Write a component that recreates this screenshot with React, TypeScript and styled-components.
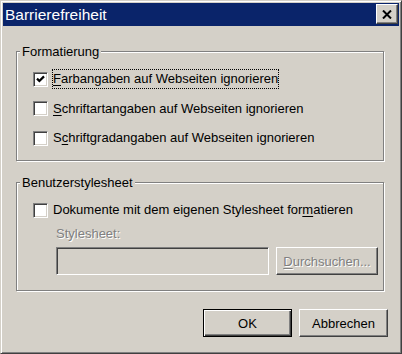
import React from 'react';
import styled, { createGlobalStyle, css } from 'styled-components';

const GlobalStyle = createGlobalStyle`
  html, body {
    margin: 0;
    padding: 0;
    background: #d4d0c8;
  }
`;

const Window = styled.div`
  box-sizing: border-box;
  width: 402px;
  height: 354px;
  padding: 2px;
  display: flex;
  flex-direction: column;
  background: #d4d0c8;
  border: 1px solid;
  border-color: #d4d0c8 #404040 #404040 #d4d0c8;
  box-shadow: inset 1px 1px 0 #fff, inset -1px -1px 0 #808080;
  font-family: 'Liberation Sans', Arial, sans-serif;
  font-size: 13px;
  color: #000;
`;

const TitleBar = styled.div`
  height: 23px;
  flex: none;
  display: flex;
  align-items: flex-start;
  justify-content: space-between;
  background: #0a246a;
`;

const Title = styled.div`
  padding-left: 2px;
  line-height: 23px;
  font-size: 15.5px;
  color: #fff;
  white-space: nowrap;
`;

const raised = css`
  border: 1px solid;
  border-color: #fff #404040 #404040 #fff;
  box-shadow: inset -1px -1px 0 #808080, inset 1px 1px 0 #d4d0c8;
`;

const CloseButton = styled.button`
  box-sizing: border-box;
  width: 22px;
  height: 20px;
  margin: 1px 1px 0 0;
  padding: 0;
  display: flex;
  align-items: center;
  justify-content: center;
  background: #d4d0c8;
  ${raised}
`;

const Body = styled.div`
  flex: 1;
  display: flex;
  flex-direction: column;
  padding: 17px 11px 0 13px;
`;

const Group = styled.fieldset<{ $gap?: number }>`
  margin: ${(p) => p.$gap ?? 0}px 4px 0 0;
  padding: 0;
  min-width: 0;
  border: 1px solid #808080;
  box-shadow: inset 1px 1px 0 #fff, 1px 1px 0 #fff;
`;

const Legend = styled.legend`
  margin-left: 3px;
  padding: 0 2px;
  line-height: 17px;
  background: #d4d0c8;
  white-space: nowrap;
`;

const GroupContent = styled.div<{ $bottom: number; $rowGap?: number }>`
  display: flex;
  flex-direction: column;
  gap: ${(p) => p.$rowGap ?? 0}px;
  padding: 9px 0 ${(p) => p.$bottom}px 16px;
`;

const Row = styled.div`
  height: 20px;
  display: flex;
  align-items: center;
`;

const Box = styled.span`
  box-sizing: border-box;
  flex: none;
  width: 15px;
  height: 15px;
  display: flex;
  align-items: center;
  justify-content: center;
  background: #fff;
  border: 1px solid;
  border-color: #808080 #fff #fff #808080;
  box-shadow: inset 1px 1px 0 #404040, inset -1px -1px 0 #d4d0c8;
`;

const Label = styled.span<{ $focused?: boolean }>`
  margin-left: 4px;
  line-height: 18px;
  white-space: nowrap;
  border: 1px dotted ${(p) => (p.$focused ? '#000' : 'transparent')};
`;

const Key = styled.span`
  text-decoration: underline;
  text-underline-offset: 2px;
`;

const disabledText = css`
  color: #808080;
  text-shadow: 1px 1px 0 #fff;
`;

const FieldLabel = styled.div`
  margin: 6px 0 0 23px;
  line-height: 16px;
  ${disabledText}
`;

const FieldRow = styled.div`
  margin: 5px 0 0 23px;
  display: flex;
  gap: 7px;
`;

const TextInput = styled.div`
  box-sizing: border-box;
  width: 213px;
  height: 28px;
  background: #d4d0c8;
  border: 1px solid;
  border-color: #808080 #fff #fff #808080;
  box-shadow: inset 1px 1px 0 #404040, inset -1px -1px 0 #d4d0c8;
`;

const PushButton = styled.button<{ $primary?: boolean; $width: number }>`
  box-sizing: border-box;
  width: ${(p) => p.$width}px;
  height: 28px;
  padding: 0;
  font: inherit;
  color: #000;
  background: #d4d0c8;
  ${raised}
  ${(p) =>
    p.$primary &&
    css`
      border-color: #000;
      box-shadow: inset 1px 1px 0 #fff, inset -1px -1px 0 #404040,
        inset -2px -2px 0 #808080;
    `}
  &:disabled {
    ${disabledText}
  }
`;

const ButtonRow = styled.div`
  margin-top: 18px;
  display: flex;
  justify-content: flex-end;
  gap: 7px;
`;

const CheckMark = () => (
  <svg width="9" height="8" viewBox="0 0 9 8">
    <polyline points="1,3.6 3.4,6 8,1.4" fill="none" stroke="#000" strokeWidth="2.2" />
  </svg>
);

const CloseIcon = () => (
  <svg width="10" height="9" viewBox="0 0 10 9">
    <path d="M1 0.5 L9 8.5 M9 0.5 L1 8.5" stroke="#000" strokeWidth="2" />
  </svg>
);

interface CheckRowProps {
  checked?: boolean;
  focused?: boolean;
  children: React.ReactNode;
}

const CheckRow: React.FC<CheckRowProps> = ({ checked, focused, children }) => (
  <Row>
    <Box>{checked && <CheckMark />}</Box>
    <Label $focused={focused}>{children}</Label>
  </Row>
);

export default function App() {
  return (
    <>
      <GlobalStyle />
      <Window>
        <TitleBar>
          <Title>Barrierefreiheit</Title>
          <CloseButton aria-label="Schließen">
            <CloseIcon />
          </CloseButton>
        </TitleBar>
        <Body>
          <Group>
            <Legend>Formatierung</Legend>
            <GroupContent $bottom={12} $rowGap={9.5}>
              <CheckRow checked focused>
                <Key>F</Key>arbangaben auf Webseiten ignorieren
              </CheckRow>
              <CheckRow>
                <Key>S</Key>chriftartangaben auf Webseiten ignorieren
              </CheckRow>
              <CheckRow>
                S<Key>c</Key>hriftgradangaben auf Webseiten ignorieren
              </CheckRow>
            </GroupContent>
          </Group>
          <Group $gap={13}>
            <Legend>Benutzerstylesheet</Legend>
            <GroupContent $bottom={15}>
              <CheckRow>
                Dokumente mit dem eigenen Stylesheet for<Key>m</Key>atieren
              </CheckRow>
              <FieldLabel>Stylesheet:</FieldLabel>
              <FieldRow>
                <TextInput />
                <PushButton $width={102} disabled>
                  <Key>D</Key>urchsuchen...
                </PushButton>
              </FieldRow>
            </GroupContent>
          </Group>
          <ButtonRow>
            <PushButton $primary $width={89}>
              OK
            </PushButton>
            <PushButton $width={89}>Abbrechen</PushButton>
          </ButtonRow>
        </Body>
      </Window>
    </>
  );
}
